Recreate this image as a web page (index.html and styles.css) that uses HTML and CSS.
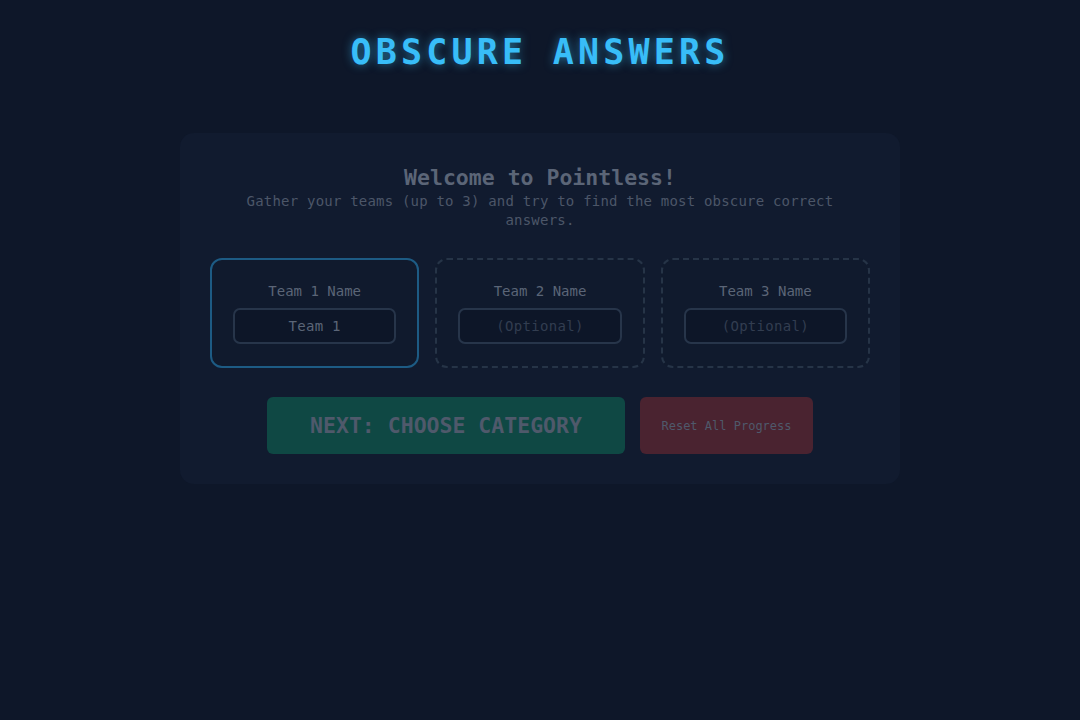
FILE: index.html
```html
<!DOCTYPE html>
<html>
    <head>
        <meta charset="utf-8">
        <title>Obscure Answers</title>
        <link rel="stylesheet" href="styles.css">
    </head>
    <body>

        <h1 class="main-title">OBSCURE ANSWERS</h1>

        <div class="card">

            <h2 class="welcome">Welcome to Pointless!</h2>
            <p class="intro">Gather your teams (up to 3) and try to find the most obscure correct answers.</p>

            <div class="teams">

                <div class="team team-active">
                    <label class="team-label">Team 1 Name</label>
                    <input class="team-input" type="text" value="Team 1">
                </div>

                <div class="team">
                    <label class="team-label">Team 2 Name</label>
                    <input class="team-input" type="text" placeholder="(Optional)">
                </div>

                <div class="team">
                    <label class="team-label">Team 3 Name</label>
                    <input class="team-input" type="text" placeholder="(Optional)">
                </div>

            </div>

            <div class="controls">
                <button class="next">NEXT: CHOOSE CATEGORY</button>
                <button class="reset">Reset All Progress</button>
            </div>

        </div>

    </body>
</html>
```

FILE: styles.css
```css
*{
    margin: 0;
    padding: 0;
    box-sizing: border-box;
}

body, html{
    height: 100%;
}

body{
    background: #0e1729;
    font-family: "DejaVu Sans Mono", "Liberation Mono", monospace;
    color: #5b6577;
}

.main-title{
    padding-top: 30px;
    text-align: center;
    font-size: 35px;
    line-height: 44px;
    letter-spacing: 4.2px;
    color: #38bdf8;
    text-shadow: 0 0 10px rgba(56, 189, 248, 0.55);
}

.card{
    width: 720px;
    margin: 59px auto 0;
    padding: 31px 30px 30px;
    background: #111b2f;
    border-radius: 14px;
}

.welcome{
    text-align: center;
    font-size: 21.5px;
    line-height: 28px;
    color: #5b6577;
}

.intro{
    text-align: center;
    font-size: 14px;
    line-height: 19px;
    letter-spacing: 0.2px;
    color: #4c5668;
}

.teams{
    display: grid;
    grid-template-columns: repeat(3, 1fr);
    gap: 16px;
    margin-top: 28px;
}

.team{
    display: flex;
    flex-direction: column;
    align-items: center;
    padding: 22px 21px 22px;
    border: 2px dashed #263447;
    border-radius: 12px;
    background: #101a2d;
}

.team-active{
    border: 2px solid #1d5b84;
}

.team-label{
    font-size: 14px;
    line-height: 18px;
    margin-bottom: 8px;
    color: #5b6577;
}

.team-input{
    width: 100%;
    height: 36px;
    border: 2px solid #27354a;
    border-radius: 7px;
    background: #0d1628;
    text-align: center;
    font-family: "DejaVu Sans Mono", "Liberation Mono", monospace;
    font-size: 14px;
    letter-spacing: 0.3px;
    color: #5b6577;
    outline: none;
}

.team-input::placeholder{
    color: #323d50;
}

.controls{
    display: flex;
    justify-content: center;
    gap: 15px;
    margin-top: 29px;
}

button{
    height: 57px;
    border: 0;
    border-radius: 6px;
    font-family: "DejaVu Sans Mono", "Liberation Mono", monospace;
    color: #4f596b;
}

.next{
    width: 358px;
    background: #0f4844;
    font-size: 21.5px;
    font-weight: bold;
}

.reset{
    width: 173px;
    background: #4a2330;
    font-size: 12px;
}
```
